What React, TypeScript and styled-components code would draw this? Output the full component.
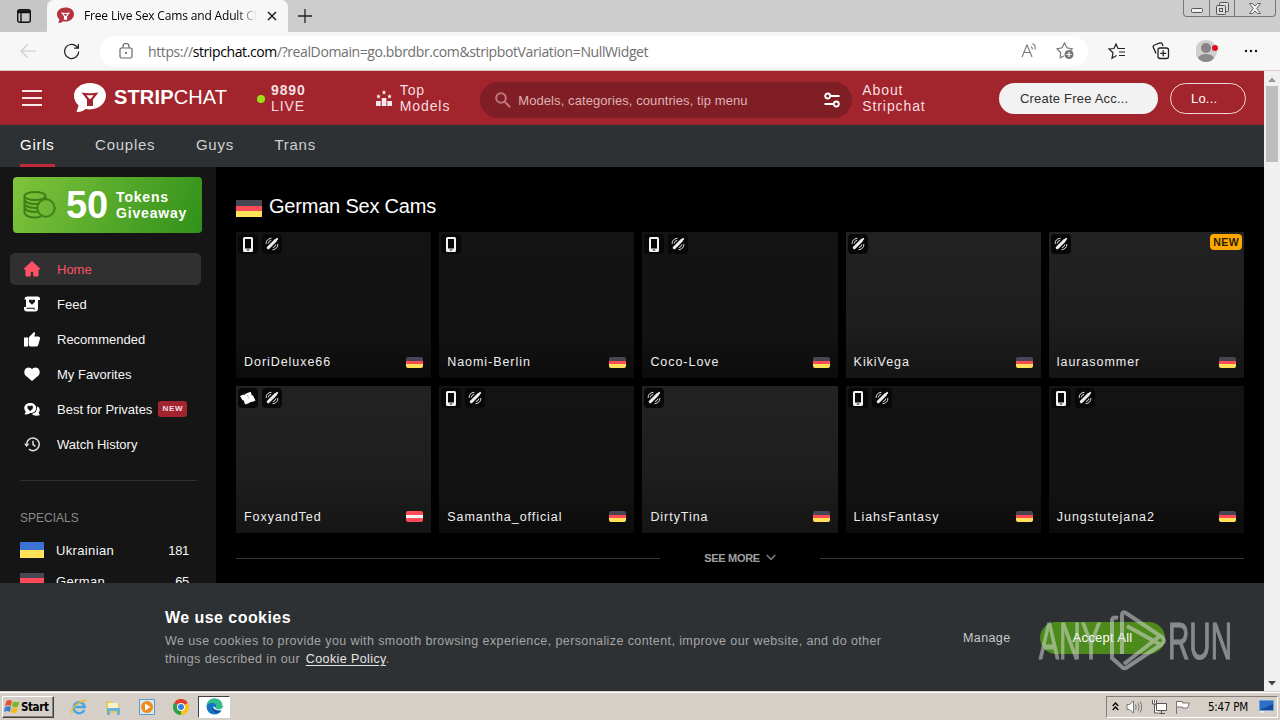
import * as React from 'react';
import styled, { createGlobalStyle, css } from 'styled-components';

type FlagCode = 'de' | 'at' | 'ua';
type BadgeKind = 'mobile' | 'toy' | 'ticket';

interface IModel {
    name: string;
    badges: BadgeKind[];
    flag: FlagCode;
    bright?: boolean;
    isNew?: boolean;
}

const models: IModel[] = [
    { name: 'DoriDeluxe66', badges: ['mobile', 'toy'], flag: 'de' },
    { name: 'Naomi-Berlin', badges: ['mobile'], flag: 'de' },
    { name: 'Coco-Love', badges: ['mobile', 'toy'], flag: 'de' },
    { name: 'KikiVega', badges: ['toy'], flag: 'de', bright: true },
    { name: 'laurasommer', badges: ['toy'], flag: 'de', bright: true, isNew: true },
    { name: 'FoxyandTed', badges: ['ticket', 'toy'], flag: 'at', bright: true },
    { name: 'Samantha_official', badges: ['mobile', 'toy'], flag: 'de' },
    { name: 'DirtyTina', badges: ['toy'], flag: 'de', bright: true },
    { name: 'LiahsFantasy', badges: ['mobile', 'toy'], flag: 'de' },
    { name: 'Jungstutejana2', badges: ['mobile', 'toy'], flag: 'de' },
];

const flags: Record<FlagCode, string> = {
    de: 'linear-gradient(#464655 0 33%, #ff4b55 33% 67%, #ffe15a 67%)',
    at: 'linear-gradient(#ff4b55 0 33%, #f5f5f5 33% 67%, #ff4b55 67%)',
    ua: 'linear-gradient(#3d73d6 0 50%, #ffe15a 50%)',
};

const GlobalStyle = createGlobalStyle`
    * {
        box-sizing: border-box;
    }

    body {
        margin: 0;
        overflow: hidden;
        background: #000;
        font-family: "Liberation Sans", Arial, sans-serif;
    }

    svg {
        display: block;
        flex-shrink: 0;
    }
`;

const Screen = styled.div`
    position: relative;
    width: 1280px;
    height: 720px;
    display: flex;
    flex-direction: column;
    overflow: hidden;
    white-space: nowrap;
`;

/* browser window */

const TabStrip = styled.div`
    height: 32px;
    flex-shrink: 0;
    display: flex;
    align-items: center;
    background: #cdcdcd;
    color: #111;
`;

const TabActions = styled.div`
    width: 47px;
    height: 32px;
    padding: 8px 0 0 16px;
    background: #c6c6c6;
    border-bottom-right-radius: 7px;
`;

const Tab = styled.div`
    width: 241px;
    height: 32px;
    padding: 0 11px 1px 10px;
    display: flex;
    align-items: center;
    background: #f7f7f7;
    border-radius: 7px 7px 0 0;
`;

const TabTitle = styled.div`
    width: 173px;
    margin: 0 auto 0 10px;
    overflow: hidden;
    color: #000;
    font: 12px "Open Sans", "Noto Sans", sans-serif;
    letter-spacing: -0.16px;
    mask-image: linear-gradient(90deg, #000 88%, transparent);
`;

const NewTab = styled.div`
    margin-left: 9px;
`;

const WindowButtons = styled.div`
    width: 93px;
    height: 17px;
    margin: 0 4px auto auto;
    display: grid;
    grid-template-columns: 25px 25px 1fr;
    border: 1px solid #777;
    border-top: 0;
    border-radius: 0 0 4px 4px;
`;

const WindowButton = styled.div`
    display: flex;
    align-items: center;
    justify-content: center;

    & + & {
        border-left: 1px solid #777;
    }
`;

const Toolbar = styled.div`
    height: 39px;
    flex-shrink: 0;
    padding: 0 20px;
    display: flex;
    align-items: center;
    background: #f7f7f7;
    border-bottom: 1px solid #e0c4c2;
`;

const Reload = styled.div`
    margin: 0 20px 0 27px;
`;

const AddressBar = styled.div`
    width: 988px;
    height: 31px;
    padding: 0 13px 0 19px;
    display: flex;
    align-items: center;
    background: #fff;
    border-radius: 16px;
`;

const Url = styled.div`
    margin: 0 auto 0 15px;
    font: 14px "Open Sans", "Noto Sans", sans-serif;
    letter-spacing: -0.39px;
    color: #707070;

    b {
        font-weight: 400;
        color: #000;
    }
`;

const AddressActions = styled.div`
    display: flex;
    gap: 19px;
`;

const ToolbarActions = styled.div`
    margin-left: 20px;
    display: flex;
    align-items: center;
    gap: 26px;
`;

const Viewport = styled.div`
    height: 621px;
    flex-shrink: 0;
    display: flex;
`;

const Page = styled.div`
    width: 1264px;
    display: flex;
    flex-direction: column;
`;

const ScrollTrack = styled.div`
    width: 16px;
    padding: 6px 0;
    display: flex;
    flex-direction: column;
    align-items: center;
    background: #f0f0f0;
`;

const ScrollThumb = styled.div`
    width: 12px;
    height: 76px;
    margin: 4px 0 auto;
    background: #bdbdbd;
`;

/* site header */

const Header = styled.header`
    height: 54px;
    flex-shrink: 0;
    padding: 0 18px 0 22px;
    display: flex;
    align-items: center;
    background: #a2242c;
    border-bottom: 1px solid #91252b;
    color: #fff;
`;

const Logo = styled.div`
    margin-left: 32px;
    display: flex;
    align-items: center;
    font-size: 20px;
    letter-spacing: 0.15px;

    span {
        width: 115px;
        margin-left: 8px;
    }
`;

const HeaderLink = styled.div<{ $gap: number; $left: number }>`
    margin-left: ${props => props.$left}px;
    display: flex;
    align-items: center;
    gap: ${props => props.$gap}px;
    font-size: 14px;
    line-height: 16px;
    letter-spacing: 0.9px;
    color: #f7dfe0;
`;

const LiveDot = styled.i`
    width: 8px;
    height: 8px;
    margin-top: 2px;
    border-radius: 50%;
    background: #9be017;
`;

const Search = styled.div`
    width: 372px;
    height: 36px;
    margin: 4px 0 0 30px;
    padding: 0 12px 0 15px;
    display: flex;
    align-items: center;
    border-radius: 18px;
    background: #801e25;
    font-size: 13px;
    letter-spacing: 0.08px;
    color: #dfb1b4;

    span {
        margin: 1px auto 0 7px;
    }
`;

const PillButton = styled.button<{ $outline?: boolean }>`
    height: 31px;
    margin-top: 2px;
    padding: 0 0 1px 21px;
    border-radius: 16px;
    font: 13px "Liberation Sans", Arial, sans-serif;
    letter-spacing: 0.2px;
    text-align: left;

    ${props => props.$outline ? css`
        width: 76px;
        margin-left: 12px;
        border: 1px solid #f4d8d9;
        background: none;
        color: #fff;
        padding-left: 20px;
    ` : css`
        width: 159px;
        margin-left: auto;
        border: 0;
        background: #f2f2f2;
        color: #303030;
    `}
`;

const Categories = styled.nav`
    height: 42px;
    flex-shrink: 0;
    padding-left: 20px;
    display: flex;
    gap: 40.5px;
    background: #2e3134;
    font-size: 15px;
    letter-spacing: 0.75px;
    line-height: 39px;
`;

const Category = styled.a<{ $active?: boolean }>`
    border-bottom: 3px solid ${props => props.$active ? '#c22a3a' : 'transparent'};
    color: ${props => props.$active ? '#fff' : '#cfd0d1'};
`;

const Body = styled.div`
    height: 416px;
    display: flex;
    overflow: hidden;
`;

/* sidebar */

const SidebarWrapper = styled.aside`
    width: 216px;
    flex-shrink: 0;
    padding: 10px 14px 0 10px;
    background: #151515;
    color: #f5f5f5;
    font-size: 13px;
`;

const Giveaway = styled.div`
    width: 189px;
    height: 56px;
    margin: 0 0 20px 3px;
    padding-left: 10px;
    display: flex;
    align-items: center;
    border-radius: 4px;
    background: linear-gradient(115deg, #80c43c, #30911a);
    color: #fff;
    font-weight: 700;
`;

const GiveawayAmount = styled.div`
    margin: 0 8px 0 10px;
    font-size: 38px;
    letter-spacing: -0.1px;
`;

const GiveawayLabel = styled.div`
    font-size: 14px;
    line-height: 16px;
    letter-spacing: 0.8px;
`;

const MenuItem = styled.div<{ $active?: boolean }>`
    width: 191px;
    height: 32px;
    margin-bottom: 3px;
    padding-left: 14px;
    display: flex;
    align-items: center;
    border-radius: 5px;
    background: ${props => props.$active ? '#303030' : 'none'};
    color: ${props => props.$active ? '#ff5066' : '#f5f5f5'};

    > span {
        margin-left: 17px;
    }
`;

const MenuBadge = styled.b`
    height: 16px;
    margin-left: 6px;
    padding: 0 4px;
    border-radius: 3px;
    background: #a2242f;
    color: #f6dfe0;
    font-size: 8px;
    line-height: 16px;
    letter-spacing: 0.75px;
`;

const Divider = styled.hr`
    height: 1px;
    margin: 20px 5px 29px 10px;
    border: 0;
    background: #303030;
`;

const SidebarHeading = styled.div`
    margin: 0 0 16px 10px;
    font-size: 12px;
    line-height: 16px;
    color: #8a8a8a;
`;

const SpecialRow = styled.div`
    height: 31px;
    padding: 0 13px 0 10px;
    display: flex;
    align-items: flex-start;
    line-height: 17px;
    letter-spacing: 0.35px;

    span {
        margin: 0 auto 0 12px;
    }

    em {
        font-style: normal;
        letter-spacing: -0.3px;
    }
`;

const Flag = styled.i<{ $code: FlagCode; $width: number; $height: number }>`
    width: ${props => props.$width}px;
    height: ${props => props.$height}px;
    flex-shrink: 0;
    border-radius: ${props => props.$width < 20 ? 2 : 0}px;
    background: ${props => flags[props.$code]};
`;

/* model list */

const Main = styled.main`
    flex: 1;
    padding: 26px 20px 0;
    background: #000;
`;

const Title = styled.h1`
    margin: 0 0 13px;
    display: flex;
    align-items: center;
    gap: 7px;
    color: #fff;
    font-size: 20px;
    font-weight: 400;
    line-height: 26px;
    letter-spacing: -0.2px;

    i {
        margin-top: 4px;
    }
`;

const Cards = styled.div`
    display: grid;
    grid-template-columns: repeat(5, 1fr);
    grid-auto-rows: 146.4px;
    gap: 8px;
`;

const Card = styled.div<{ $bright?: boolean }>`
    padding: 2px 8px 7px 2px;
    display: flex;
    flex-direction: column;
    justify-content: space-between;
    background: ${props => props.$bright
        ? 'linear-gradient(#222 0, #1e1e1e 60%, #151515)'
        : 'linear-gradient(#131313 0, #121212 75%, #0b0b0b)'};
`;

const CardTop = styled.div`
    display: flex;
    gap: 4px;
`;

const CardBadge = styled.div`
    width: 20px;
    height: 20px;
    display: flex;
    align-items: center;
    justify-content: center;
    border-radius: 4px;
    background: #080808;
`;

const NewBadge = styled.b`
    height: 16px;
    margin: 0 -6px 0 auto;
    padding: 0 3px;
    border-radius: 4px;
    background: #ffa800;
    color: #2a1a00;
    font-size: 10.5px;
    line-height: 16px;
    letter-spacing: 0.4px;
`;

const CardBottom = styled.div`
    padding-left: 6px;
    display: flex;
    align-items: center;
    justify-content: space-between;
    color: #eee;
    font-size: 12.5px;
    line-height: 18px;
    letter-spacing: 0.95px;
`;

const SeeMore = styled.div`
    margin-top: 17px;
    display: grid;
    grid-template-columns: 424px 160px 424px;
    align-items: center;
    color: #a0a0a0;
    font-size: 11px;
    font-weight: 700;
    line-height: 16px;
    letter-spacing: -0.3px;

    hr {
        width: 100%;
        height: 1px;
        margin: 1px 0 0;
        border: 0;
        background: #343434;
    }

    div {
        display: flex;
        align-items: center;
        justify-content: center;
        gap: 6px;
    }
`;

/* cookie banner */

const CookieBanner = styled.section`
    flex: 1;
    padding: 25px 99px 0 165px;
    display: flex;
    background: #2e3133;
    color: #a3a5a6;
    font-size: 12.5px;
    letter-spacing: 0.4px;
`;

const CookieText = styled.div`
    width: 798px;
    line-height: 18px;

    h2 {
        margin: 0 0 4px;
        color: #fff;
        font-size: 16px;
        line-height: 20px;
        letter-spacing: 0.45px;
    }

    a {
        margin-left: 2px;
        color: #e5e5e5;
        text-decoration: underline;
        text-underline-offset: 2px;
    }
`;

const CookieManage = styled.div`
    width: 77px;
    line-height: 60px;
    color: #c9cacb;
`;

const CookieAccept = styled.button`
    width: 125px;
    height: 32px;
    margin-top: 14px;
    padding: 0 0 2px;
    border: 0;
    border-radius: 16px;
    background: #4d8a1c;
    color: #fff;
    font: 13px "Liberation Sans", Arial, sans-serif;
    letter-spacing: 0.3px;
`;

const Watermark = styled.svg`
    position: absolute;
    left: 1036px;
    top: 608px;
    opacity: 0.5;
`;

/* taskbar */

const Taskbar = styled.footer`
    height: 28px;
    padding: 2px 2px 2px 2px;
    display: flex;
    align-items: center;
    background: #d6cfc8;
    border-top: 1px solid #fff;
    box-shadow: 0 -1px #d6cfc8;
    color: #000;
    font-family: "DejaVu Sans Condensed", "DejaVu Sans", sans-serif;
`;

const StartButton = styled.div`
    width: 52px;
    height: 22px;
    display: flex;
    align-items: center;
    gap: 1px;
    padding-left: 1px;
    border: 1px solid;
    border-color: #fff #404040 #404040 #fff;
    box-shadow: inset -1px -1px #848078;
    font-size: 11.5px;
    font-weight: 700;
    letter-spacing: -0.4px;
`;

const QuickLaunch = styled.div`
    margin-left: 17px;
    display: flex;
    gap: 18px;
`;

const TaskButton = styled.div`
    width: 32px;
    height: 22px;
    margin-left: 9px;
    display: flex;
    align-items: center;
    justify-content: center;
    background: #fff;
    border: 1px solid;
    border-color: #404040 #fff #fff #404040;
`;

const Tray = styled.div`
    width: 172px;
    height: 22px;
    margin-left: auto;
    padding-left: 5px;
    display: flex;
    align-items: center;
    border: 1px solid;
    border-color: #848078 #fff #fff #848078;
    font-size: 11.5px;
    letter-spacing: -0.25px;

    svg {
        margin-right: 7px;
    }

    span {
        margin: 0 11px 0 10px;
    }

    svg:last-child {
        margin-right: 0;
    }
`;

/* speech bubble with a cocktail glass cut out of it */
const SpeechLogo = ({ size, color, inner }: { size: number; color: string; inner: string }) => (
    <svg width={size} height={size} viewBox="0 0 32 32">
        <path d="M16 1C7 1 0 6.500 0 13.500c0 4.600 2 7.500 4.600 9.900L2.500 30c4 .2 7-1 9-3 1.500.3 3 .4 4.500.4C25 27.400 32 21 32 13.500S25 1 16 1z" fill={color} />
        <path d="M7.500 10.500Q16 12 24.500 10.500L19 17.500V24h-6v-6.500z" fill={inner} />
        <path d="M12.300 13.200h7.400L16.500 17h-1z" fill={color} />
    </svg>
);

const BadgeIcon = ({ kind }: { kind: BadgeKind }) => {
    if (kind === 'mobile') {
        return <svg width="10" height="15" viewBox="0 0 10 15">
            <path fillRule="evenodd" d="M1.500 0h7Q10 0 10 1.500v12Q10 15 8.500 15h-7Q0 15 0 13.500v-12Q0 0 1.500 0zM2 2v9.500h6V2zM3.700 12.600v1h2.600v-1z" fill="#f5f5f5" />
        </svg>;
    }

    if (kind === 'ticket') {
        return <svg width="16" height="14" viewBox="0 0 16 14">
            <path d="M0 5l3.500-1.500q1.200 1 2.200-.8L10.500.8l1 2.200q-.5 1.500 1.500 1.600l2.500 4.800-3.500 1.600q-1.500-.8-2.200.8l-4.300 1.700-1.500-2.500q.8-1.600-1.500-1.800z" fill="#fff" />
            <path d="M7.500 4l.4.900m.6 1.600l.4.900" stroke="#555" strokeWidth=".8" />
        </svg>;
    }

    return <svg width="14" height="14" viewBox="0 0 15 15" fill="none" stroke="#eee" strokeLinecap="round">
        <path d="M3.500 11.500l7.500-7.500" strokeWidth="3.300" />
        <path d="M11 4l2-2" strokeWidth="2.200" />
        <path d="M1.200 7Q1 2 6.500 1.400M3.500 6.500Q3.500 4.300 6.300 3.600M8.500 13.600Q13.800 13 13.800 8M8.800 11.300Q11.500 10.600 11.600 8.500" strokeWidth="1" />
    </svg>;
};

const HomeIcon = () => (
    <svg width="16" height="16" viewBox="0 0 16 16">
        <path d="M8 .5L0 8h2v7h4.300v-4.500h3.400V15H14V8h2z" fill="#ff5066" stroke="#ff5066" strokeLinejoin="round" />
    </svg>
);

const FeedIcon = () => (
    <svg width="16" height="16" viewBox="0 0 16 16">
        <path d="M3.500.5h10.500Q16 .5 16 3v1h-2v8.500Q14 15.500 11 15.500H3Q0 15.500 0 12.500V11h2V3.500H.5Q.5.5 3.500.5z" fill="#fff" />
        <path d="M8 8.700L5.200 6Q4.300 3.800 6.300 3.600 7.500 3.600 8 4.600q.5-1 1.700-1 2 .2 1.100 2.400zM2.500 11.700h8v.8q0 .8.500 1.200H10.500Q9.700 13.500 9.500 12.700H2.500z" fill="#151515" />
    </svg>
);

const ThumbIcon = () => (
    <svg width="16" height="15" viewBox="0 0 16 15" fill="#fff">
        <path d="M0 5.500h4v9H0zM4.700 5.500L9.500.5q2-.8 1.500 1.500L10.300 4.500H14.500q1.700.2 1.500 2.300l-1.800 6.200q-.5 1.500-2 1.500H6.500q-1.800 0-1.800-1.800z" />
    </svg>
);

const HeartIcon = () => (
    <svg width="16" height="14" viewBox="0 0 16 14">
        <path d="M8 14L1.500 8.500C-.8 6 .3.5 4.300.5Q6.800.5 8 2 9.200.5 11.700.5c4 0 5.100 5.500 2.800 8z" fill="#fff" />
    </svg>
);

const PrivatesIcon = () => (
    <svg width="16" height="14" viewBox="0 0 16 14">
        <path d="M6.200 1C2.700 1 .3 3.200.3 6c0 1.500.5 2.700 1.500 3.600L.5 12.300q4 .5 5.700-1.200c3.500 0 6-2.200 6-5.100S9.700 1 6.200 1z" fill="#fff" />
        <path d="M13.300 4.300q2.700 1.200 2.400 4-.2 1.500-1.200 2.300l1.300 2.700Q10 14.500 7.800 12q5.500-1 5.500-7.700z" fill="#fff" />
        <path d="M6.200 9.300L3.600 6.600Q2.700 4.200 4.600 3.600q1-.1 1.600.9.600-1 1.600-.9 1.900.6 1 3z" fill="#151515" />
    </svg>
);

const HistoryIcon = () => (
    <svg width="16" height="15" viewBox="0 0 16 15" fill="none" stroke="#ddd" strokeWidth="1.500">
        <path d="M2.600 8V7.300a6.300 6.300 0 1 1 2.300 4.900M9 3.700V7.500l2.500 1.800" />
        <path d="M0 6.800h5.400L2.700 9.900z" fill="#ddd" stroke="none" />
    </svg>
);

const menuItems = [
    { label: 'Home', icon: <HomeIcon />, active: true },
    { label: 'Feed', icon: <FeedIcon /> },
    { label: 'Recommended', icon: <ThumbIcon /> },
    { label: 'My Favorites', icon: <HeartIcon /> },
    { label: 'Best for Privates', icon: <PrivatesIcon />, badge: 'NEW' },
    { label: 'Watch History', icon: <HistoryIcon /> },
];

const BrowserChrome = () => (
    <>
        <TabStrip>
            <TabActions>
                <svg width="16" height="16" viewBox="0 0 16 16" fill="none" stroke="#111" strokeWidth="1.400">
                    <rect x="1.700" y="1.700" width="12.600" height="12.600" rx="2" />
                    <path d="M2 3h12M2 4.500h12M5 4v10" />
                </svg>
            </TabActions>
            <Tab>
                <SpeechLogo size={17} color="#b53440" inner="#fff" />
                <TabTitle>Free Live Sex Cams and Adult Chat</TabTitle>
                <svg width="10" height="10" viewBox="0 0 10 10" stroke="#222" strokeWidth="1.500"><path d="M1 1l8 8M9 1L1 9" /></svg>
            </Tab>
            <NewTab>
                <svg width="16" height="16" viewBox="0 0 16 16" stroke="#222" strokeWidth="1.300"><path d="M8 1v14M1 8h14" /></svg>
            </NewTab>
            <WindowButtons>
                <WindowButton>
                    <svg width="12" height="12" viewBox="0 0 12 12" fill="#eee" stroke="#555"><rect x=".5" y="6.500" width="11" height="4" rx="1" /></svg>
                </WindowButton>
                <WindowButton>
                    <svg width="13" height="13" viewBox="0 0 13 13" fill="#ddd" stroke="#555">
                        <rect x="3.500" y=".5" width="9" height="9" rx="1" />
                        <rect x=".5" y="3.500" width="9" height="9" rx="1" />
                        <rect x="3.500" y="6.500" width="3" height="3" />
                    </svg>
                </WindowButton>
                <WindowButton>
                    <svg width="12" height="11" viewBox="0 0 12 11" fill="#eee" stroke="#666">
                        <path d="M.5.500h3.200L6 3 8.300.5h3.200L7.800 5.500l3.700 5H8.300L6 8l-2.300 2.500H.5l3.700-5z" />
                    </svg>
                </WindowButton>
            </WindowButtons>
        </TabStrip>
        <Toolbar>
            <svg width="16" height="16" viewBox="0 0 16 16" fill="none" stroke="#ccc" strokeWidth="1.200"><path d="M16 8H1M7.500 1.500L1 8l6.500 6.500" /></svg>
            <Reload>
                <svg width="17" height="17" viewBox="0 0 18 18" fill="none" stroke="#222" strokeWidth="1.300">
                    <path d="M16.600 9a7.500 7.500 0 1 1-2.400-5.500L16 5.300M16.300 1v4.500h-4.500" />
                </svg>
            </Reload>
            <AddressBar>
                <svg width="14" height="16" viewBox="0 0 14 16" fill="none" stroke="#666" strokeWidth="1.200">
                    <rect x="1" y="5" width="12" height="10" rx="1.500" />
                    <path d="M4 5V3.500a3 3 0 0 1 6 0V5" />
                    <circle cx="7" cy="10" r=".5" fill="#666" />
                </svg>
                <Url>https://<b>stripchat.com</b>/?realDomain=go.bbrdbr.com&amp;stripbotVariation=NullWidget</Url>
                <AddressActions>
                    <svg width="17" height="17" viewBox="0 0 17 17" fill="none" stroke="#777" strokeWidth="1.100">
                        <path d="M2 15L7 3l5 12M4 10.500h6M11 4.500q1.500 1 1.300 3M12.500 1.500q3.500 2 2.500 6" />
                    </svg>
                    <svg width="19" height="18" viewBox="0 0 19 18" fill="none" stroke="#777" strokeWidth="1.200">
                        <path d="M8 14l-3.800 1.800.5-5.300L1 6.800l5-1L8.500 1 11 5.800l5.200 1-2 2.200" />
                        <circle cx="13" cy="12.500" r="4.500" fill="#777" stroke="none" />
                        <path d="M10.500 12.500h5M13 10v5" stroke="#fff" />
                    </svg>
                </AddressActions>
            </AddressBar>
            <ToolbarActions>
                <svg width="18" height="17" viewBox="0 0 18 17" fill="none" stroke="#222" strokeWidth="1.200">
                    <path d="M8.500 12.500L4 15.300l1-5.600L1 6l5-.5L8 1l2 4.500h7M11 9h6M11 12.500h6" />
                </svg>
                <svg width="18" height="18" viewBox="0 0 18 18" fill="none" stroke="#222" strokeWidth="1.300">
                    <rect x="6" y="6" width="10.500" height="10.500" rx="2" />
                    <path d="M11.200 8.300v6M8.200 11.300h6M4 11.500L1.200 5Q1 3.500 2.500 3L8 1q1.700-.3 2.300 1l.7 2" />
                </svg>
                <svg width="22" height="24" viewBox="0 0 22 24">
                    <circle cx="10" cy="12" r="11" fill="#d2d0ce" />
                    <circle cx="10" cy="9" r="5" fill="#858585" />
                    <path d="M2 19q2-4 8-4t8 4q-3 4-8 4t-8-4z" fill="#8a8a8a" />
                    <circle cx="19" cy="9" r="3" fill="#e00b1c" />
                </svg>
                <svg width="14" height="4" viewBox="0 0 14 4" fill="#111">
                    <circle cx="2" cy="2" r="1.200" /><circle cx="7" cy="2" r="1.200" /><circle cx="12" cy="2" r="1.200" />
                </svg>
            </ToolbarActions>
        </Toolbar>
    </>
);

const SiteHeader = () => (
    <>
        <Header>
            <svg width="20" height="17" viewBox="0 0 20 17" fill="#fbe9ea"><path d="M0 1h20v2H0zM0 8h20v2H0zM0 15h20v2H0z" /></svg>
            <Logo>
                <SpeechLogo size={32} color="#fff" inner="#a2242c" />
                <span><b>STRIP</b>CHAT</span>
            </Logo>
            <HeaderLink $left={28} $gap={6}>
                <LiveDot />
                <div><b>9890</b><br />LIVE</div>
            </HeaderLink>
            <HeaderLink $left={70} $gap={8}>
                <svg width="16" height="16" viewBox="0 0 16 16" fill="#fbe9ea">
                    <path d="M0 11h4.700v5H0zM5.700 8h4.700v8H5.700zM11.300 11H16v5h-4.700zM8 0l.7 1.500 1.600.2-1.200 1.100.3 1.700L8 3.700l-1.400.8.3-1.700-1.200-1.100 1.600-.2zM2.500 4l.7 1.500 1.600.2-1.200 1.100.3 1.700-1.400-.8-1.400.8.3-1.700L.2 5.700l1.600-.2zM13.500 4l.7 1.500 1.600.2-1.200 1.100.3 1.700-1.400-.8-1.400.8.300-1.700-1.200-1.100 1.600-.2z" />
                </svg>
                <div>Top<br />Models</div>
            </HeaderLink>
            <Search>
                <svg width="16" height="16" viewBox="0 0 16 16" fill="none" stroke="#c2777d" strokeWidth="2">
                    <circle cx="6" cy="6" r="4.800" /><path d="M9.500 9.500l5.700 5.700" />
                </svg>
                <span>Models, categories, countries, tip menu</span>
                <svg width="16" height="16" viewBox="0 0 16 16" fill="none" stroke="#fff" strokeWidth="1.800">
                    <circle cx="3.700" cy="4" r="2.500" /><path d="M6.200 4H15.500M.5 12h9.300" /><circle cx="12.300" cy="12" r="2.500" />
                </svg>
            </Search>
            <HeaderLink $left={10} $gap={0}>
                <div>About<br />Stripchat</div>
            </HeaderLink>
            <PillButton>Create Free Acc...</PillButton>
            <PillButton $outline>Lo...</PillButton>
        </Header>
        <Categories>
            <Category $active>Girls</Category>
            <Category>Couples</Category>
            <Category>Guys</Category>
            <Category>Trans</Category>
        </Categories>
    </>
);

const Sidebar = () => (
    <SidebarWrapper>
        <Giveaway>
            <svg width="33" height="28" viewBox="0 0 33 28" fill="none" stroke="#3f7f16" strokeWidth="2">
                <ellipse cx="12" cy="5" rx="10.500" ry="4" />
                <path d="M1.500 5v4q2 4 10.500 4 2 0 4-.5M22.500 5v3M1.500 9v4q2 4 12.500 4M1.500 13v4q2 4 12.500 4M1.500 17v5q2 4.500 10.500 4.500 4 0 6-1" />
                <circle cx="23" cy="17" r="8.700" />
            </svg>
            <GiveawayAmount>50</GiveawayAmount>
            <GiveawayLabel>Tokens<br />Giveaway</GiveawayLabel>
        </Giveaway>
        {menuItems.map(item => (
            <MenuItem key={item.label} $active={item.active}>
                {item.icon}
                <span>{item.label}</span>
                {item.badge && <MenuBadge>{item.badge}</MenuBadge>}
            </MenuItem>
        ))}
        <Divider />
        <SidebarHeading>SPECIALS</SidebarHeading>
        <SpecialRow><Flag $code="ua" $width={24} $height={16} /><span>Ukrainian</span><em>181</em></SpecialRow>
        <SpecialRow><Flag $code="de" $width={24} $height={16} /><span>German</span><em>65</em></SpecialRow>
    </SidebarWrapper>
);

const ModelCard = ({ model }: { model: IModel }) => (
    <Card $bright={model.bright}>
        <CardTop>
            {model.badges.map(kind => <CardBadge key={kind}><BadgeIcon kind={kind} /></CardBadge>)}
            {model.isNew && <NewBadge>NEW</NewBadge>}
        </CardTop>
        <CardBottom>
            {model.name}
            <Flag $code={model.flag} $width={17} $height={11} />
        </CardBottom>
    </Card>
);

const WindowsTaskbar = () => (
    <Taskbar>
        <StartButton>
            <svg width="16" height="15" viewBox="0 0 16 15">
                <path d="M2.500 2q3-2 5.500 0L7 7Q4 5.500 1 7z" fill="#e5532a" />
                <path d="M9 2.500q3 1.500 6.500 0L14 7.500q-3 1.500-6 0z" fill="#76b82a" />
                <path d="M1 8q3-1.500 6 0l-1 5q-3-2-6 0z" fill="#3c7fd0" />
                <path d="M8 8.500q3 1.500 6 0l-1.500 5q-3 1.500-5.500 0z" fill="#f6b91c" />
            </svg>
            Start
        </StartButton>
        <QuickLaunch>
            <svg width="16" height="16" viewBox="0 0 16 16" fill="none">
                <path d="M13.300 11a5.500 5.500 0 1 1 .4-3H4" stroke="#46a7e0" strokeWidth="2.400" />
                <path d="M1 14.500Q-.5 10 7 4.500 14-.5 15 2.500" stroke="#edbd36" strokeWidth="1.500" />
            </svg>
            <svg width="16" height="16" viewBox="0 0 16 16">
                <path d="M1 2h5l1 2h7v10H1z" fill="#e7c95f" />
                <path d="M3 4h10v5H3z" fill="#f8f3cc" />
                <path d="M2 9h13v7h-3v-4H5v4H2z" fill="#68b4d9" />
            </svg>
            <svg width="16" height="16" viewBox="0 0 16 16">
                <path d="M.5.500h15v15H.5z" fill="#d4e8f7" stroke="#5d9cc9" />
                <circle cx="8" cy="8" r="6" fill="#f08b16" />
                <path d="M6 4.500v7L11.500 8z" fill="#fff" />
            </svg>
            <svg width="16" height="16" viewBox="0 0 16 16">
                <path d="M8 8L1 4a8 8 0 0 1 14 0z" fill="#e33b2e" />
                <path d="M8 8l7-4A8 8 0 0 1 8 16z" fill="#fbc116" />
                <path d="M8 8v8A8 8 0 0 1 1 4z" fill="#2c9f4b" />
                <circle cx="8" cy="8" r="4" fill="#fff" />
                <circle cx="8" cy="8" r="3" fill="#3d7de0" />
            </svg>
        </QuickLaunch>
        <TaskButton>
            <svg width="17" height="17" viewBox="0 0 17 17">
                <circle cx="8.500" cy="8.500" r="8" fill="#1673c4" />
                <path d="M.7 7Q2 .5 8.500.500 16 .8 16.500 8q0 3.500-4 3.500-3 0-3-1.500 1.500-2 0-4Q6 3 .7 7z" fill="#2fc08a" />
                <path d="M9.500 10Q7 10 7 8q-2 5 3 7 3 .5 5.500-2.500-6 1.500-6-2.500z" fill="#0d4f9b" />
                <path d="M7 8.500Q7 12.500 15.500 12.500L16.800 9.500Q14.500 12 11 11.300 8.500 10.500 9.500 9.300z" fill="#fff" />
            </svg>
        </TaskButton>
        <Tray>
            <svg width="7" height="9" viewBox="0 0 7 9" fill="none" stroke="#000" strokeWidth="1.300"><path d="M.7 4l2.800-3 2.800 3M.7 8l2.800-3 2.800 3" /></svg>
            <svg width="18" height="14" viewBox="0 0 18 14" fill="none" stroke="#777">
                <path d="M1 4.500h2.500L7.500 1v12L3.500 9.500H1z" fill="#fff" />
                <path d="M9.500 4.500q1.500 2.500 0 5M12 3q2.500 4 0 8M14 1.500q3.500 5.500 0 11" />
            </svg>
            <svg width="17" height="16" viewBox="0 0 17 16" fill="#fff" stroke="#555">
                <path d="M5.500 4.500h10v7h-10zM8 14.500h6M10.500 12v2M1.500 1v4h4V1M3.500 5v9h4M3.500 1v3" />
            </svg>
            <svg width="16" height="14" viewBox="0 0 16 14" fill="#fff" stroke="#777">
                <path d="M1.500 14V1M1.500 1.500h6v1.500h7l-2 5H7.500V7h-6" />
            </svg>
            <span>5:47 PM</span>
            <svg width="15" height="13" viewBox="0 0 15 13">
                <path d="M.5.500h14v10H.5z" fill="#2d6fc4" stroke="#6d9ed3" />
                <path d="M1 10L14 4v6z" fill="#16489b" />
                <path d="M1 11h4v1.500H1z" fill="#eee" />
            </svg>
        </Tray>
    </Taskbar>
);

export default class App extends React.Component {

    public render() {
        return <Screen>
            <GlobalStyle />
            <BrowserChrome />
            <Viewport>
                <Page>
                    <SiteHeader />
                    <Body>
                        <Sidebar />
                        <Main>
                            <Title><Flag $code="de" $width={26} $height={17} />German Sex Cams</Title>
                            <Cards>
                                {models.map(model => <ModelCard key={model.name} model={model} />)}
                            </Cards>
                            <SeeMore>
                                <hr />
                                <div>
                                    SEE MORE
                                    <svg width="10" height="7" viewBox="0 0 10 7" fill="none" stroke="#777" strokeWidth="1.700"><path d="M.7 1L5 5.300 9.300 1" /></svg>
                                </div>
                                <hr />
                            </SeeMore>
                        </Main>
                    </Body>
                    <CookieBanner>
                        <CookieText>
                            <h2>We use cookies</h2>
                            We use cookies to provide you with smooth browsing experience, personalize content, improve our website, and do other<br />
                            things described in our <a>Cookie Policy</a>.
                        </CookieText>
                        <CookieManage>Manage</CookieManage>
                        <CookieAccept>Accept All</CookieAccept>
                    </CookieBanner>
                </Page>
                <ScrollTrack>
                    <svg width="8" height="5" viewBox="0 0 8 5"><path d="M0 5l4-4.500L8 5z" fill="#999" /></svg>
                    <ScrollThumb />
                    <svg width="8" height="5" viewBox="0 0 8 5"><path d="M0 0h8L4 4.500z" fill="#444" /></svg>
                </ScrollTrack>
            </Viewport>
            <WindowsTaskbar />
            <Watermark width="198" height="66" viewBox="0 0 198 66" fill="#e0e0e0" stroke="#e0e0e0">
                <text x="3" y="51" strokeWidth="1.200" fontSize="52" textLength="62" lengthAdjust="spacingAndGlyphs">ANY</text>
                <text x="132" y="51" strokeWidth="1.200" fontSize="52" textLength="64" lengthAdjust="spacingAndGlyphs">RUN</text>
                <path d="M86 46V7q0-4 4-2l36 24q4 4 0 7L90 60q-2 1-4-1L76 50V35M76 51V33q0-3 0-20 0-5 6-3M86 46V20M91 18l34 19M88 56l36-28" fill="none" strokeWidth="4" />
            </Watermark>
        </Screen>;
    }
}
